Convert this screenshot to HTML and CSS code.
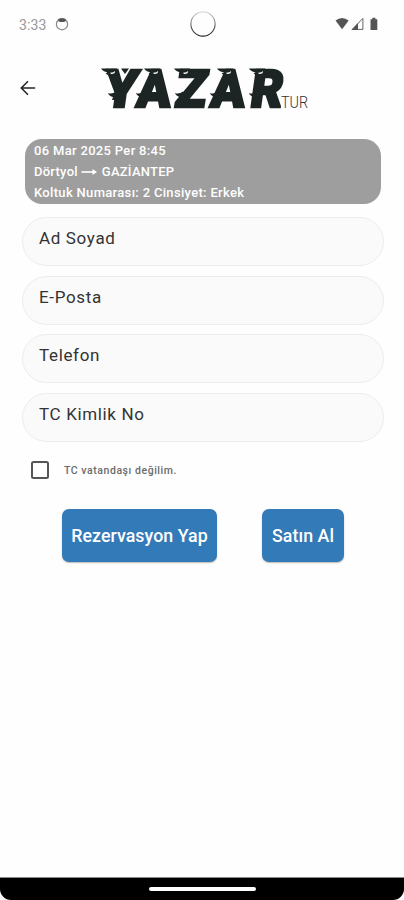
FILE: index.html
```html
<!DOCTYPE html>
<html lang="tr">
<head>
<meta charset="utf-8">
<title>Yazar Tur</title>
<link rel="stylesheet" href="styles.css">
</head>
<body>
<div class="phone">
  <header class="status">
    <span class="time">3:33</span>
    <svg class="app-icon" width="14" height="14" viewBox="0 0 14 14"><circle cx="7" cy="7.2" r="5.6" fill="none" stroke="#888" stroke-width="1.2"/><path d="M3 2.600Q7-.3 11 2.600L10.300 4.600Q7 5.600 3.700 4.600Z" fill="#555"/></svg>
    <svg class="camera" width="28" height="28" viewBox="0 0 28 28"><defs><linearGradient id="ring" x1="0" y1="0" x2="0" y2="1"><stop offset="0" stop-color="#ddd"/><stop offset=".45" stop-color="#777"/><stop offset="1" stop-color="#222"/></linearGradient></defs><circle cx="14" cy="14" r="12.1" fill="none" stroke="url(#ring)" stroke-width="1.1"/></svg>
    <svg class="signals" width="44" height="14" viewBox="0 0 44 14"><path d="M.5 3.500Q7-1.500 13.700 3.500L7.100 12.200Z" fill="#555"/><path d="M17.300 12.400 27.900 1.300V12.400Z" fill="none" stroke="#666"/><path d="M16.500 12.900 23 6V12.900Z" fill="#555"/><path d="M35.500 2.200H37.300V.8H40.400V2.200H42.300V12.900H35.500Z" fill="#555"/></svg>
  </header>
  <div class="bar">
    <svg class="back" width="16" height="16" viewBox="0 0 16 16"><path d="M15.200 8H1.500M8 1.300 1.300 8 8 14.700" fill="none" stroke="#222" stroke-width="1.500"/></svg>
    <svg class="logo" width="212" height="76" viewBox="0 -13 212 76">
      <defs>
        <g id="gust"><path d="M0 0H16V8H8L9 6.500Q6 7 4.500 4.500L8 4Q2 3.500 0 0Z" fill="#1d2524"/><path d="M9 4.300Q13 4.400 14 2.600Q14.500 5.600 10 5.500Z" fill="#fefefe"/></g>
        <path id="breeze" d="M0 0Q4 1.500 8-1.500V7H4L5 4Q1 3 0 0Z" fill="#1d2524"/>
      </defs>
      <g class="word">
        <text transform="translate(4.500 44) skewX(-8)" textLength="33" lengthAdjust="spacingAndGlyphs">Y</text>
        <text transform="translate(37.500 44) skewX(-6)" textLength="34" lengthAdjust="spacingAndGlyphs">A</text>
        <text transform="translate(75.500 44) skewX(-9)" textLength="31" lengthAdjust="spacingAndGlyphs">Z</text>
        <text transform="translate(111.500 44) skewX(-6)" textLength="34" lengthAdjust="spacingAndGlyphs">A</text>
        <text transform="translate(151 44) skewX(-8)" textLength="32" lengthAdjust="spacingAndGlyphs">R</text>
      </g>
      <use href="#gust" x="3" y="5.500"/><use href="#gust" x="46" y="5.500"/><use href="#gust" x="76" y="5.500"/><use href="#gust" x="119" y="5.500"/><use href="#gust" x="151" y="5.500"/>
      <path d="M23 5.500H31L27 11Z" fill="#1d2524"/>
      <use href="#breeze" x="10" y="30"/><use href="#breeze" x="38" y="30"/><use href="#breeze" x="77" y="30"/><use href="#breeze" x="112" y="30"/><use href="#breeze" x="151" y="30"/>
      <text class="tur" x="183" y="45" textLength="27" lengthAdjust="spacingAndGlyphs">TUR</text>
    </svg>
  </div>
  <main>
    <section class="trip">
      <p>06 Mar 2025 Per 8:45</p>
      <p class="route">Dörtyol <svg width="17" height="8" viewBox="0 0 17 8"><path d="M.5 4H13" fill="none" stroke="#fff" stroke-width="1.600"/><path d="M11.500 1 16 4 11.500 7Z" fill="#fff"/></svg> GAZİANTEP</p>
      <p>Koltuk Numarası: 2 Cinsiyet: Erkek</p>
    </section>
    <form class="fields">
      <label class="field">Ad Soyad</label>
      <label class="field">E-Posta</label>
      <label class="field">Telefon</label>
      <label class="field">TC Kimlik No</label>
    </form>
    <div class="check"><span class="box"></span><span>TC vatandaşı değilim.</span></div>
    <div class="actions"><button class="reserve">Rezervasyon Yap</button><button class="buy">Satın Al</button></div>
  </main>
  <footer class="nav"><div class="nav-shape"><span class="handle"></span></div></footer>
</div>
</body>
</html>
```
FILE: styles.css
```css
* { box-sizing: border-box; }
body { margin: 0; background: #fff; font-family: Roboto, sans-serif; }
.phone { width: 404px; height: 900px; display: flex; flex-direction: column; overflow: hidden; background: #fefefe; }
.status { height: 50px; display: flex; align-items: center; padding: 0 24px 0 19px; }
.time { width: 36px; font-size: 14px; color: #999; letter-spacing: .1px; }
.app-icon { margin-bottom: 2px; }
.camera { margin: 0 118px 2px 119.500px; }
.signals { margin: 0 0 2px; flex: none; }
.bar { height: 89px; display: flex; align-items: flex-start; padding-left: 20px; }
.back { margin-top: 30px; }
.logo { margin-left: 62px; }
.word { font-family: Roboto, sans-serif; font-size: 52px; font-weight: 900; fill: #1d2524; stroke: #1d2524; stroke-width: 2.600px; }
.tur { font-family: Roboto, sans-serif; font-size: 16px; font-weight: 300; fill: #333; }
.trip { width: 356px; height: 65px; margin-left: 24.500px; padding: 1px 9.500px; border-radius: 17px; background: #9e9e9e; color: #fff; font-size: 13px; font-weight: 500; }
.trip p { margin: 0; height: 21px; line-height: 21px; white-space: nowrap; letter-spacing: .32px; }
.trip .route { letter-spacing: .25px; }
.fields { display: flex; flex-direction: column; gap: 9.700px; margin: 13px 20px 0 21.500px; }
.field { height: 49px; padding-left: 16.500px; border: 1px solid #ececec; border-radius: 25px; background: #fafafa; color: #333; font-size: 17px; line-height: 41px; letter-spacing: .65px; }
.check { height: 20px; display: flex; align-items: center; gap: 15px; margin: 18px 0 0 31px; color: #6b6b6b; font-size: 10.500px; font-weight: 500; letter-spacing: .55px; }
.box { width: 18px; height: 18px; border: 2px solid #555; border-radius: 2.500px; }
.actions { display: flex; gap: 45px; margin: 29px 0 0 62px; }
button { height: 53px; padding: 0; border: 0; border-radius: 7px; background: #327ab8; box-shadow: 0 1px 1.500px rgba(0,0,0,.28); color: #fff; font: 500 17.800px Roboto, sans-serif; letter-spacing: .05px; white-space: nowrap; }
.reserve { width: 155px; }
.buy { width: 82px; }
.nav { height: 23px; margin-top: auto; border-top: 1px solid #888; }
.nav-shape { height: 22px; display: flex; justify-content: center; padding-top: 9px; border-radius: 0 0 11px 11px; background: #000; }
.handle { width: 107px; height: 4px; border-radius: 2px; background: #fff; }
```
